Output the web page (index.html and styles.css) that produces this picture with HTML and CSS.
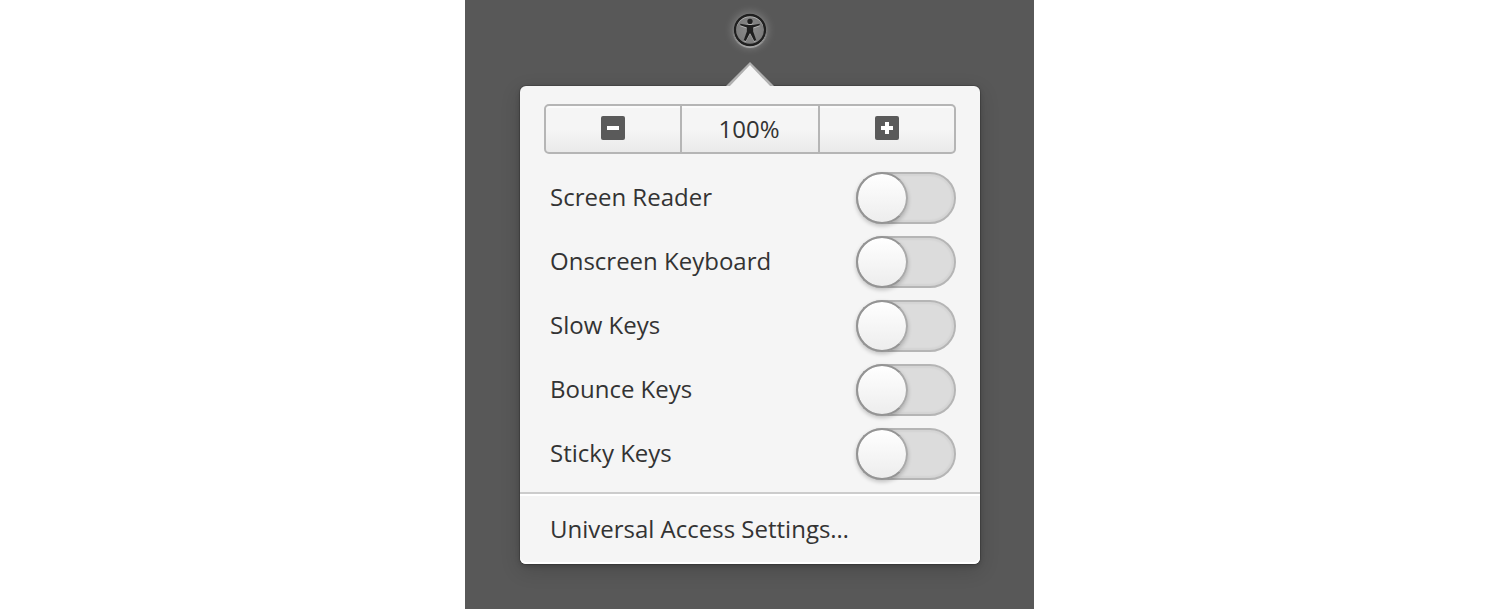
FILE: index.html
```html
<!DOCTYPE html>
<html lang="en">
<head>
<meta charset="utf-8">
<meta name="viewport" content="width=device-width, initial-scale=1">
<title>Universal Access</title>
<link rel="stylesheet" href="styles.css">
</head>
<body>
<main class="desktop">
  <button class="indicator" type="button" aria-label="Universal Access">
    <svg viewBox="0 0 34 34" width="34" height="34" aria-hidden="true">
      <circle cx="17" cy="17" r="15" fill="none" stroke="#1f1f1f" stroke-width="2.3"/>
      <circle cx="17" cy="8.4" r="2.7" fill="#1f1f1f"/>
      <path d="M7.3 10.8 L14 12.1 H20 L26.7 10.8 V12.3 L20.2 14.5 V18.5 L23.3 27.3 L21.2 28.1 L17.3 20.5 H16.7 L12.8 28.1 L10.7 27.3 L13.8 18.5 V14.5 L7.3 12.3 Z" fill="#1f1f1f"/>
    </svg>
  </button>
  <section class="popover" aria-label="Universal Access">
    <svg class="arrow" viewBox="0 0 52 26" width="52" height="26" aria-hidden="true">
      <path d="M2 24 L26 0 L50 24 Z" fill="#b0b0b0"/>
      <path d="M4 26 L26 3 L48 26 Z" fill="#f5f5f5"/>
    </svg>
    <div class="zoom">
      <button type="button" aria-label="Zoom out">
        <svg viewBox="0 0 24 24" width="24" height="24" aria-hidden="true">
          <rect width="24" height="24" rx="2" fill="#5a5a5a"/>
          <path d="M6 10h12v4H6z" fill="#fff"/>
        </svg>
      </button>
      <button class="level" type="button">100%</button>
      <button type="button" aria-label="Zoom in">
        <svg viewBox="0 0 24 24" width="24" height="24" aria-hidden="true">
          <rect width="24" height="24" rx="2" fill="#5a5a5a"/>
          <path d="M10 6h4v4h4v4h-4v4h-4v-4H6v-4h4z" fill="#fff"/>
        </svg>
      </button>
    </div>
    <div class="options">
      <label class="option"><span class="name">Screen Reader</span><input class="switch" type="checkbox" role="switch"></label>
      <label class="option"><span class="name">Onscreen Keyboard</span><input class="switch" type="checkbox" role="switch"></label>
      <label class="option"><span class="name">Slow Keys</span><input class="switch" type="checkbox" role="switch"></label>
      <label class="option"><span class="name">Bounce Keys</span><input class="switch" type="checkbox" role="switch"></label>
      <label class="option"><span class="name">Sticky Keys</span><input class="switch" type="checkbox" role="switch"></label>
    </div>
    <a class="settings" href="#settings">Universal Access Settings…</a>
  </section>
</main>
</body>
</html>
```

FILE: styles.css
```css
*,
*::before {
  box-sizing: border-box;
}

body {
  margin: 0;
  padding-right: 1px;
  background: #fff;
  color: #333;
  font-family: "Open Sans", "Noto Sans", sans-serif;
  font-size: 24px;
  line-height: 32px;
}

button {
  font: inherit;
  color: inherit;
}

.desktop {
  display: flex;
  flex-direction: column;
  align-items: center;
  max-width: 569px;
  min-height: 100vh;
  margin: 0 auto;
  padding: 13px 54px 45px 55px;
  background: #585858;
}

.indicator {
  display: flex;
  padding: 0;
  border: 0;
  border-radius: 50%;
  background: radial-gradient(circle, #8c8c8c 0%, #707070 100%);
  box-shadow: 0 1px 1px rgba(255, 255, 255, 0.4), 0 0 8px 1px rgba(255, 255, 255, 0.22);
}

.indicator svg {
  filter: drop-shadow(0 1px 0 rgba(255, 255, 255, 0.4));
}

.popover {
  position: relative;
  width: 100%;
  margin-top: 39px;
  border-radius: 6px;
  background: #f5f5f5;
  box-shadow: 0 0 0 1px rgba(0, 0, 0, 0.14), 0 2px 5px rgba(0, 0, 0, 0.2), 0 6px 20px rgba(0, 0, 0, 0.16), inset 0 -2px #fff;
}

.arrow {
  position: absolute;
  top: -24px;
  left: 50%;
  margin-left: -26px;
}

.zoom {
  display: grid;
  grid-template-columns: 138fr 138fr 136fr;
  margin: 0 24px;
  padding-top: 18px;
}

.zoom button {
  display: flex;
  align-items: center;
  justify-content: center;
  height: 50px;
  padding: 0 0 2px;
  border: 2px solid #b5b5b5;
  border-left-width: 0;
  background: linear-gradient(#f5f5f5 50%, #eaeaea);
  box-shadow: inset 0 2px rgba(255, 255, 255, 0.6);
}

.zoom button:first-child {
  border-left-width: 2px;
  border-radius: 5px 0 0 5px;
}

.zoom button:last-child {
  border-radius: 0 5px 5px 0;
}

.zoom .level {
  padding: 0 2px 0 0;
}

.options {
  padding: 12px 24px 6px 30px;
}

.option {
  display: flex;
  align-items: center;
  justify-content: space-between;
  height: 64px;
}

.name {
  padding-bottom: 2px;
}

.switch {
  appearance: none;
  width: 100px;
  height: 52px;
  margin: 0;
  border: 2px solid #b5b5b5;
  border-radius: 26px;
  background: #dcdcdc;
  box-shadow: inset 0 0 2px 2px rgba(0, 0, 0, 0.04);
}

.switch::before {
  content: "";
  display: block;
  width: 52px;
  height: 52px;
  margin: -2px;
  border: 2px solid #949494;
  border-right-color: #aaa;
  border-radius: 50%;
  background: linear-gradient(#fff, #ededed) padding-box;
  box-shadow: 0 2px 4px rgba(0, 0, 0, 0.22);
}

.switch:checked::before {
  margin-left: 46px;
}

.settings {
  display: block;
  padding: 19px 30px;
  border-top: 2px solid #ccc;
  border-radius: 0 0 6px 6px;
  box-shadow: inset 0 2px #fff;
  color: inherit;
  text-decoration: none;
}
```
